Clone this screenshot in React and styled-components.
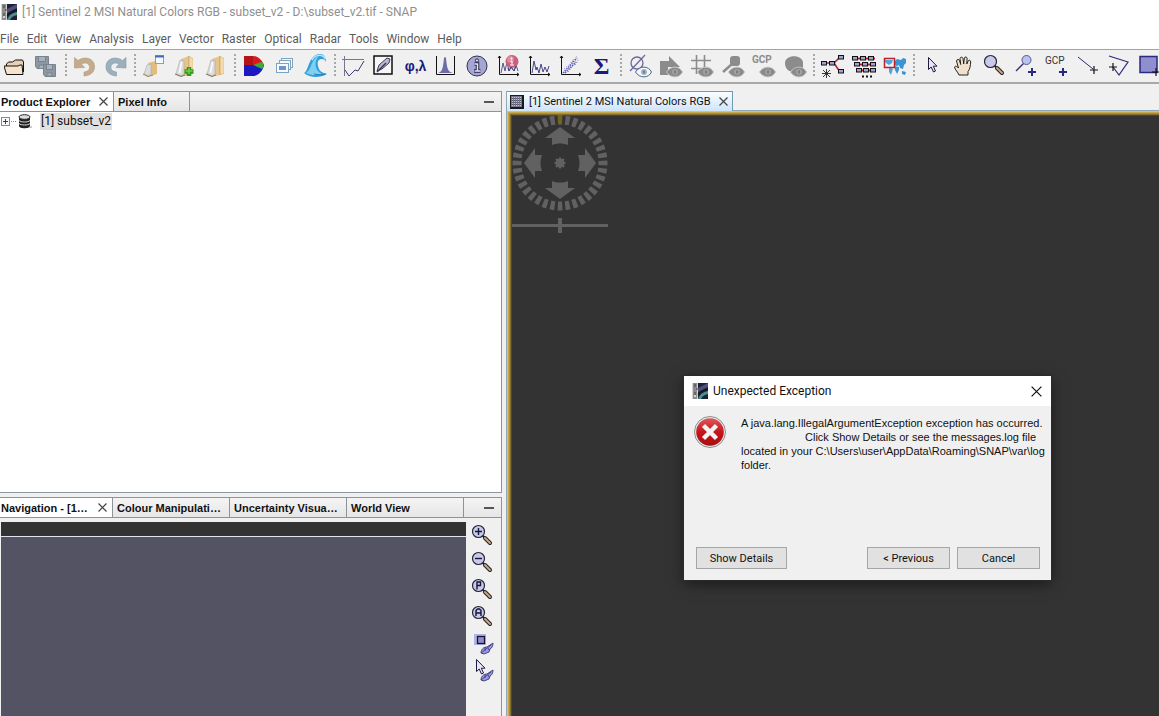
import React from 'react'
import styled, { createGlobalStyle } from 'styled-components'

const GlobalStyle = createGlobalStyle`
  * { box-sizing: border-box; }
  body { margin: 0; overflow: hidden; }
  button { font: inherit; color: inherit; background: none; border: 0; padding: 0; white-space: nowrap; }
  h1, h2, p { margin: 0; font: inherit; }
  svg { display: block; flex: none; }
`

const Window = styled.div`
  height: 100vh;
  display: flex;
  flex-direction: column;
  overflow: hidden;
  background: #f0f0f0;
  color: #111;
  font: 11px Roboto, sans-serif;
`

const TitleBar = styled.header`
  height: 24px;
  display: flex;
  align-items: center;
  gap: 5px;
  padding-left: 1px;
  background: #fff;
  color: #8f8f8f;
  font-size: 12px;
`

const MenuBar = styled.nav`
  height: 25px;
  display: flex;
  align-items: center;
  gap: 8px;
  padding-top: 4px;
  background: #fff;
  color: #5c5c5c;
  font-size: 12px;
`

const Toolbar = styled.div`
  height: 35px;
  display: flex;
  align-items: center;
  border-top: 1px solid #a3a3a3;
  border-bottom: 2px solid #a8a8a8;
  background: #f0f0f0;
`

const ToolButton = styled.button`
  flex: none;
  width: 31px;
  height: 27px;
  display: flex;
  align-items: center;
  justify-content: center;
`

const Separator = styled.span`
  flex: none;
  width: 7px;
  height: 24px;
  background: repeating-linear-gradient(#a8a8a8 0 2px, transparent 2px 4px) 3px 0 / 2px 100% no-repeat;
`

const Workspace = styled.main`
  flex: 1;
  min-height: 0;
  display: flex;
  gap: 4px;
  padding-top: 7px;
`

const Dock = styled.div`
  flex: 0 1 502px;
  min-width: 0;
  display: flex;
  flex-direction: column;
  gap: 4px;
`

const Panel = styled.section`
  flex: ${(p) => p.$grow} 1 0;
  min-height: 0;
  display: flex;
  flex-direction: column;
  border: solid #8d939d;
  border-width: 1px 1px ${(p) => (p.$open ? '0' : '1px')} 0;
`

const TabRow = styled.div`
  flex: none;
  height: 20px;
  display: flex;
  border-bottom: 1px solid #8d939d;
  background: linear-gradient(#f4f4f4, #e6e6e6);
`

const Tab = styled.button`
  width: ${(p) => p.$width}px;
  padding: 0 5px 0 ${(p) => (p.$first ? '1px' : '4px')};
  display: flex;
  align-items: center;
  justify-content: space-between;
  border-right: 1px solid #8d939d;
  background: ${(p) => (p.$active ? '#fff' : 'transparent')};
  font: bold 11px 'Liberation Sans', Arial, sans-serif;
`

const MinimizeButton = styled.button`
  width: 18px;
  margin-left: auto;
  display: flex;
  align-items: center;
`

const Tree = styled.div`
  flex: 1;
  background: #fff;
`

const TreeRow = styled.div`
  height: 19px;
  display: flex;
  align-items: center;
`

const TreeLabel = styled.span`
  height: 17px;
  margin-left: 8px;
  padding: 0 1px;
  line-height: 17px;
  font-size: 12px;
  background: #e0e0e0;
`

const NavigationBody = styled.div`
  flex: 1;
  min-height: 0;
  display: flex;
  padding: 4px 0 0 1px;
`

const Thumbnail = styled.div`
  flex: 1;
  display: flex;
  flex-direction: column;
  background: #333;
  padding-top: 14px;
`

const Viewport = styled.div`
  flex: 1;
  border-top: 1px solid #e4e4f0;
  background: #545363;
`

const ZoomTools = styled.div`
  width: 35px;
  display: flex;
  flex-direction: column;
  align-items: center;

  ${ToolButton} {
    padding-right: 2px;
  }
`

const Editor = styled.section`
  flex: 1;
  min-width: 0;
  display: flex;
  flex-direction: column;
  border-left: 1px solid #8fa9b8;
`

const EditorTabs = styled.div`
  flex: none;
  height: 20px;
  border-bottom: 1px solid #8fa9b8;
`

const EditorTab = styled.button`
  height: 20px;
  display: flex;
  align-items: center;
  gap: 5px;
  padding: 0 4px 0 3px;
  border: solid #6f9ab0;
  border-width: 1px 1px 0 0;
  background: linear-gradient(#fafdff, #cfe4fa);
`

const TabTitle = styled.span`
  margin-right: 3px;
`

const Canvas = styled.div`
  flex: 1;
  padding: 4px 5px;
  background: #333;
  box-shadow:
    inset 1px 1px 0 #dcc070,
    inset 2px 2px 0 #c9a64c,
    inset 3px 3px 0 #ac8d38,
    inset 4px 4px 0 #83702f,
    inset 5px 5px 0 #504726;
`

const Dialog = styled.div`
  position: absolute;
  left: 684px;
  top: 376px;
  width: 367px;
  height: 204px;
  display: flex;
  flex-direction: column;
  background: #f0f0f0;
  box-shadow: 0 0 0 1px #2b2b2b, 0 4px 14px rgba(0, 0, 0, 0.5);
`

const DialogTitle = styled.div`
  height: 30px;
  display: flex;
  align-items: center;
  gap: 5px;
  padding: 0 9px 0 8px;
  background: #fff;
  font-size: 12px;

  button {
    margin-left: auto;
  }
`

const DialogBody = styled.div`
  flex: 1;
  display: flex;
  align-items: flex-start;
  gap: 14px;
  padding: 10px;
`

const Message = styled.p`
  font-family: 'Liberation Sans', Arial, sans-serif;
  line-height: 14px;
  white-space: pre;
`

const IndentedLine = styled.span`
  padding-left: 64px;
`

const DialogActions = styled.div`
  display: flex;
  gap: 7px;
  padding: 0 11px 11px 12px;
`

const PushButton = styled.button`
  && {
    width: ${(p) => (p.$wide ? 91 : 83)}px;
    height: 22px;
    margin-right: ${(p) => (p.$wide ? 'auto' : '0')};
    border: 1px solid #a6a6a6;
    background: #e1e1e1;
  }
`

const Logo = () => (
  <svg width="16" height="16" viewBox="0 0 16 16">
    <rect width="16" height="16" fill="#1c2233" />
    <rect width="6" height="16" fill="#d4d4d4" />
    <path d="M1 1h4M1 3h4M3 1v3M1 5h4M1 7h4M5 5v2M1 9h4M1 11h4M3 9v3M1 13h1M4 13h1M1 15h4" stroke="#444" />
    <path d="M6 5 16 0v4L6 9z" fill="#4a4f7d" />
    <path d="M6 16C8 11 11 9 16 8v3c-4 1-5 2-7 5z" fill="#4d8f8f" />
    <path d="M6 12c3-4 6-5 10-6" stroke="#0b0d16" fill="none" />
  </svg>
)

const Cross = ({ size = 9, color = '#444' }) => (
  <svg width={size} height={size} viewBox="0 0 9 9">
    <path d="m.5.5 8 8m0-8-8 8" stroke={color} strokeWidth={size > 9 ? 1 : 1.2} />
  </svg>
)

const Eye = ({ color = '#c4c4c4', fill = '#8a8a8a', pupil = '#a2a2a2' }) => (
  <g>
    <path d="M7.500 18c4-6.500 13-6.500 16 0-3 6.500-12 6.500-16 0z" fill={fill} stroke={color} />
    <circle cx="16" cy="18" r="3" fill={pupil} />
    <path d="M16 16.500v3" stroke="#6f6f6f" strokeWidth="1.500" />
  </g>
)

const Axes = () => (
  <path d="M2.500 2v18.500H22M1 4l1.500-2L4 4m16 15 2 1.500-2 1.500" fill="none" stroke="#111" />
)

const Plus = ({ x, y, color = '#2a2a80', w = 2 }) => (
  <path d={`M${x - 4} ${y}h8M${x} ${y - 4}v8`} stroke={color} strokeWidth={w} />
)

const Folder = () => (
  <g>
    <path d="M8 5l8-3 4 2v16l-8 2-4-2z" fill="#e6c48a" />
    <path d="M16 2v19" stroke="#c79f5e" />
    <path d="M16.500 3l3 2v14l-3 1z" fill="#f2dcae" />
    <path d="M3 20l4-14 4 1v13l-3 2z" fill="#dcdcdc" stroke="#a9a9a9" strokeWidth=".6" />
    <path d="M8.500 8 6.500 19" stroke="#fbfbfb" strokeWidth="1.500" />
    <path d="M2 20l6 2.500 4-1.500" stroke="#7d6f58" fill="none" />
  </g>
)

const Loupe = ({ sign }) => (
  <g transform="translate(-1.500 -1.500)">
    <path d="m13 13 3 3" stroke="#222" strokeWidth="2" />
    <path d="m15.500 15.500 5 5" stroke="#222" strokeWidth="4" strokeLinecap="round" />
    <path d="m15.500 15.500 5 5" stroke="#c9a88a" strokeWidth="2" strokeLinecap="round" />
    <circle cx="9" cy="9" r="6" fill="#c9c9ea" stroke="#26263a" strokeWidth="1.200" />
    {sign && <path d={sign} fill="none" stroke="#14143a" strokeWidth="1.400" />}
  </g>
)

const Pointer = ({ x = 0, y = 0 }) => (
  <path
    transform={`translate(${x} ${y})`}
    d="M8.500 3.500v12l2.700-2.500 2.300 5 2-1-2.200-4.800h3.700z"
    fill="#e6e6f6"
    stroke="#1c1c40"
  />
)

const Node = ({ x, y }) => <rect x={x + 0.5} y={y + 0.5} width="5" height="3.500" fill="#a2a2d0" stroke="#111" />

const Sync = () => (
  <g>
    <path d="M10 21c0-3 2-6 6-6l6-4c0 3-1 5-3 6l-1 3-5 2z" fill="#9a9ad8" stroke="#44448c" />
    <path d="m10 21 10-8M14 15v4m3-3 1 2" stroke="#33337a" strokeWidth=".8" />
  </g>
)

const icons = {
  open: (
    <g stroke="#111">
      <path d="M2.500 19V10l2-2h4l3-2h7l1 2v10" fill="#e8d0b4" />
      <path d="M2.500 20.500 0 12h14l2-1h2l1 9.500z" fill="#f7e2cc" />
    </g>
  ),
  save: (
    <g stroke="#78838f">
      <path d="M.5 2.500h13v12H2l-1.500-2z" fill="#8c97a4" />
      <path d="M3.500 2.500h7v5h-7zM4 11h6v3.500H4z" fill="#a9b2bc" />
      <path d="M8.500 10.500h12v12H10l-1.500-2z" fill="#8c97a4" />
      <path d="M11.500 10.500h6v5h-6zM12 19h5v3h-5z" fill="#a9b2bc" />
    </g>
  ),
  undo: (
    <path d="M1.500 3.500 5 6.500c7-5 16-2 16.500 5.500.4 6-4 9.500-10.500 10v-4c4-.5 6-2.500 5.500-5.500-.6-3.500-4.500-4.500-8-2.500l3 3.500-10 .5z" fill="#c3ab8c" stroke="#ae977a" strokeWidth=".6" />
  ),
  redo: (
    <path d="M22 3.500 18.500 6.500c-7-5-16-2-16.500 5.500-.4 6 4 9.500 10.500 10v-4c-4-.5-6-2.500-5.500-5.500.6-3.500 4.500-4.500 8-2.500l-3 3.500 10 .5z" fill="#9bb0ba" stroke="#8499a5" strokeWidth=".6" />
  ),
  folderWindow: (
    <g>
      <path d="m6 9 7-2 2 1v12l-6 2z" fill="#e2bd7d" />
      <path d="m2 20 3-9 4-1v10l-3 2z" fill="#dcdcdc" stroke="#a9a9a9" strokeWidth=".6" />
      <path d="M1 20l5 2.500 5-1.500" stroke="#97815a" fill="none" />
      <rect x="13.500" y="1.500" width="8" height="8" fill="#f4f8ff" stroke="#7f9fd0" />
      <path d="M13 2.500h9" stroke="#3d6ec0" strokeWidth="2" />
    </g>
  ),
  folderAdd: (
    <g>
      <Folder />
      <path d="M11.500 17.500h9M16 13v9" stroke="#2f9a1c" strokeWidth="4.500" />
      <path d="M12.500 17h7M16 14v6" stroke="#6fd04a" strokeWidth="1.500" />
    </g>
  ),
  folder: <Folder />,
  rgb: (
    <g>
      <path d="M2 2h9c5 0 9 4 11 9H2z" fill="#d8191f" />
      <path d="M2 11h20c-1 6-6 11-11 11H2z" fill="#1a1ac0" />
      <path d="M11 11c4-1 7-3 9-3 2 3 2 5 0 7-3-1-6-3-9-4z" fill="#3faa35" />
      <path d="M2 2h9v9H2z" fill="#b3141a" />
    </g>
  ),
  layers: (
    <g fill="#f6fafc" stroke="#7fa3bd">
      <rect x="8.500" y="4.500" width="11" height="9" />
      <rect x="6.500" y="6.500" width="11" height="9" />
      <rect x="3.500" y="9.500" width="12" height="9" />
      <rect x="6" y="12" width="7" height="4" fill="#6a95cf" stroke="none" />
    </g>
  ),
  wave: (
    <g>
      <path d="M0 19C5 17 4 2 15 0c4-.5 7 2 7 8-1-2-2-3-4-3-4 0-5 3-4 7 1 5 4 7 9 8-7 4-17 4-23-1z" fill="#2f9fd8" />
      <path d="M2 19C8 15 7 4 15 2c-5 5-5 14 3 18-5 2-12 1-16-1z" fill="#7fd0f0" />
      <path d="M8 6C11 1 18-1 21.500 5" stroke="#bfe8f8" fill="none" strokeWidth="1.500" />
      <path d="M10 20c4 1 8 1 12 0" stroke="#1c7fc0" fill="none" />
    </g>
  ),
  chart: (
    <g fill="none" stroke="#77778c">
      <path d="M2.500 2v20M0 5.500h22" />
      <path d="m3 16 4 6 6-6 3 1 3-5 3-5" stroke="#3a3a72" />
    </g>
  ),
  pen: (
    <g>
      <rect x="1" y="2" width="18" height="18" fill="#f7f7fa" stroke="#111" strokeWidth="1.500" />
      <path d="m4 17 2-6 8-7 3 1-1 4-7 6z" fill="#b9b9cc" stroke="#3f3f62" />
      <path d="m4 18 9-9" stroke="#33334f" strokeWidth="1.500" />
    </g>
  ),
  histogram: (
    <g>
      <path d="M1.500 2v18.500h18V2" fill="none" stroke="#111" />
      <path d="M3 19c4-1 5-4 6-15 0-1 2-1 2 0 1 11 2 14 7 15z" fill="#6c6ca6" />
    </g>
  ),
  info: (
    <g transform="translate(-1 0)">
      <circle cx="12" cy="12" r="10" fill="#a6a6d4" stroke="#33334d" />
      <path d="M9.500 10h3v7m-3.500 0h6.500" fill="none" stroke="#26264d" strokeWidth="3.500" />
      <path d="M9.500 10h3v7m-3 0h6" fill="none" stroke="#e6e6f6" strokeWidth="1.500" />
      <circle cx="12" cy="6.500" r="1.600" fill="#e6e6f6" stroke="#26264d" />
    </g>
  ),
  infoChart: (
    <g>
      <Axes />
      <path d="M4 19 6 9l2 8 2-9 2 9 2-4 3 4 2-6 2 6" fill="none" stroke="#555590" />
      <circle cx="15" cy="7.500" r="6.500" fill="#c8607f" />
      <circle cx="13.500" cy="5.500" r="3.500" fill="#e08aa0" />
      <path d="M13.500 7h1.500v4m-2 0h4" stroke="#fff" fill="none" />
      <circle cx="14.500" cy="4.500" r="1" fill="#fff" />
      <path d="m11 14 1 3 2-4 3 4 2-5" fill="none" stroke="#444480" />
    </g>
  ),
  profile: (
    <g>
      <Axes />
      <path d="M4 19 6 7l2 9 1-3 2 6 2-9 2 8 2-5 2 5 2-6" fill="none" stroke="#44448c" />
    </g>
  ),
  scatter: (
    <g>
      <Axes />
      <path d="m4 19 14-15M6 19 17 8" stroke="#5c5cb8" strokeWidth="1.500" strokeDasharray="1.500 1" />
      <path d="m5 15 6-5 4-6M9 18l5-6 6-7M13 8l5-6M16 11l3-4" stroke="#7a7ac8" strokeDasharray="1 2" fill="none" />
    </g>
  ),
  noOverlay: (
    <g>
      <circle cx="9" cy="9" r="6" fill="none" stroke="#6a6a9c" strokeWidth="1.300" />
      <path d="M2 17 17 1" stroke="#6a6a9c" strokeWidth="1.300" />
      <Eye color="#4b6484" fill="#f4f7fa" pupil="#9db4c8" />
    </g>
  ),
  shapes: (
    <g>
      <path d="M1 7h9V2l11 11H9v8H1z" fill="#8c8c8c" />
      <Eye />
    </g>
  ),
  grid: (
    <g>
      <path d="M6.500 1v19M14.500 1v14M1 6.500h20M1 14.500h10" stroke="#8c8c8c" strokeWidth="1.600" />
      <Eye />
    </g>
  ),
  pin: (
    <g>
      <rect x="9" y="2" width="10" height="10" rx="3" fill="#8c8c8c" />
      <path d="m2 18 9-8" stroke="#8c8c8c" strokeWidth="2.500" />
      <Eye />
    </g>
  ),
  gcp: (
    <g>
      <text x="0" y="9" fontSize="10" fontWeight="bold" fill="#8c8c8c">GCP</text>
      <Eye />
    </g>
  ),
  mask: (
    <g>
      <path d="M2 9c0-9 18-9 18 0v8H6c-3-2-4-5-4-8z" fill="#8c8c8c" />
      <Eye />
    </g>
  ),
  graph: (
    <g>
      <path d="M3 9h10l6-6M13 9l6 9" stroke="#c0182c" strokeWidth="1.500" fill="none" />
      <Node x={0} y={7} />
      <Node x={8} y={7} />
      <Node x={17} y={1} />
      <Node x={17} y={15} />
      <path d="M5.500 15v9M1 19.500h9m-8-3.500 7 7m0-7-7 7" stroke="#222" strokeWidth=".9" />
    </g>
  ),
  batch: (
    <g>
      <path d="M2 4.500h21M3 10.500h20M4 16.500h18" stroke="#c0182c" strokeWidth="2" />
      {[0, 8, 16].map((x) => <Node key={x} x={x} y={2} />)}
      {[2, 10, 18].map((x) => <Node key={x} x={x} y={8} />)}
      {[4, 11, 18].map((x) => <Node key={x} x={x} y={14} />)}
      <path d="M10 22.500h2m2 0h2m2 0h2" stroke="#111" strokeWidth="2" />
    </g>
  ),
  world: (
    <g>
      <path d="M1 6h9l-1 3-3 2-3-2zM6 13l4 2-2 6-2-3z" fill="#4fa6dc" />
      <path d="m11 8 3-3 4 1 2-2 3 1v4l-2 2-1 4-3-1-1-3-2 1-3-1zM11 12l5 1v3l-2 4-2-4zM19 17l4 1-1 3-3-1z" fill="#3c94d2" />
      <rect x="1.500" y="4.500" width="10" height="9" fill="none" stroke="#b8202c" strokeWidth="1.500" />
    </g>
  ),
  select: <Pointer x={-1} />,
  pan: (
    <path
      d="M7 21c-1-3-4-5-4.500-8 1-1.500 2.500-.8 4 1L4.500 7C5 5 7 5 7.500 6.500l1.200 4L8 4.500c.4-1.800 2.600-1.800 3 0l.7 5.500.6-6c.6-1.500 2.600-1.300 2.800.3L14.800 10l1.300-3c.9-1.500 2.700-.7 2.600.9-.2 3.600-.8 7.600-2.700 9.600V21z"
      fill="#f1e0cc"
      stroke="#222"
    />
  ),
  zoom: <Loupe />,
  pinAdd: (
    <g>
      <path d="m2 17 8-8" stroke="#333370" strokeWidth="1.500" />
      <circle cx="12.500" cy="6" r="4.500" fill="#b9c4ec" stroke="#55559a" />
      <Plus x={18} y={18} />
    </g>
  ),
  gcpAdd: (
    <g>
      <text x="0" y="10" fontSize="10" fill="#333">GCP</text>
      <Plus x={18} y={18} />
    </g>
  ),
  line: (
    <g>
      <path d="M2 3 17 15" stroke="#2a2a80" />
      <Plus x={18} y={16} color="#111" w={1.2} />
    </g>
  ),
  polygon: (
    <g>
      <path d="m2 2 19 6-9 13-6-8" fill="none" stroke="#2a2a80" strokeWidth="1.200" />
      <Plus x={6} y={13} color="#111" w={1.2} />
    </g>
  ),
  rectangle: (
    <g>
      <rect x="2" y="2.500" width="17" height="16" fill="#8f8fd0" stroke="#2a2a80" strokeWidth="1.500" />
      <Plus x={18} y={18} color="#111" w={1.2} />
    </g>
  ),
  zoomIn: <Loupe sign="M9 5.500v7M5.500 9h7" />,
  zoomOut: <Loupe sign="M5.500 9h7" />,
  zoomPixel: <Loupe sign="M7.500 13V5.500h3.500v3.500H7.500" />,
  zoomAll: <Loupe sign="M6.500 12.500V7l1.500-1.500h2L11.500 7v5.500M6.500 9.500h5" />,
  syncViews: (
    <g>
      <rect x="3" y="2" width="12" height="11" fill="#b4b4e4" />
      <rect x="6.500" y="4.500" width="7" height="7" fill="#8f8fc8" stroke="#14143a" strokeWidth="1.300" />
      <Sync />
    </g>
  ),
  syncCursor: (
    <g>
      <Sync />
      <Pointer x={-3} y={-3} />
    </g>
  ),
}

const Icon = ({ name }) => (
  <svg width="24" height="24" viewBox="0 0 24 24">{icons[name]}</svg>
)

const Symbol = styled.span`
  color: #1a1a7a;
  font: bold ${(p) => p.$size}px 'Liberation Sans', sans-serif;
`

const SumSymbol = styled(Symbol)`
  font-family: 'Liberation Serif', serif;
`

const menus = ['File', 'Edit', 'View', 'Analysis', 'Layer', 'Vector', 'Raster', 'Optical', 'Radar', 'Tools', 'Window', 'Help']

const toolGroups = [
  ['open', 'save'],
  ['undo', 'redo'],
  ['folderWindow', 'folderAdd', 'folder'],
  ['rgb', 'layers', 'wave'],
  ['chart', 'pen', 'geo', 'histogram', 'info', 'infoChart', 'profile', 'scatter', 'sum'],
  ['noOverlay', 'shapes', 'grid', 'pin', 'gcp', 'mask'],
  ['graph', 'batch', 'world'],
  ['select', 'pan', 'zoom', 'pinAdd', 'gcpAdd', 'line', 'polygon', 'rectangle'],
]

const zoomTools = ['zoomIn', 'zoomOut', 'zoomPixel', 'zoomAll', 'syncViews', 'syncCursor']

const Tool = ({ name }) => (
  <ToolButton type="button" aria-label={name}>
    {name === 'geo' && <Symbol $size={14}>φ,λ</Symbol>}
    {name === 'sum' && <SumSymbol $size={24}>Σ</SumSymbol>}
    {icons[name] && <Icon name={name} />}
  </ToolButton>
)

const Minimize = () => (
  <MinimizeButton type="button" aria-label="Minimize">
    <svg width="12" height="4"><path d="M1 2h10" stroke="#555" strokeWidth="2" /></svg>
  </MinimizeButton>
)

const ARROW = 'M48 12 63 23h-7v7c-5-2-11-2-16 0v-7h-7z'

const Compass = () => (
  <svg width="96" height="120" viewBox="0 0 96 120">
    <g fill="#616161">
      <circle cx="48" cy="48" r="43" fill="none" stroke="#616161" strokeWidth="9" pathLength="360" strokeDasharray="6 4" transform="rotate(-93 48 48)" />
      <path d="M46 0h4v9h-4z" fill="#75631c" />
      {[0, 90, 180, 270].map((angle) => (
        <path key={angle} d={ARROW} transform={`rotate(${angle} 48 48)`} />
      ))}
      <circle cx="48" cy="48" r="4.500" />
      <path d="M48 42.500v11M42.500 48h11m-9.500-4 8 8m0-8-8 8" stroke="#616161" strokeWidth="2" />
      <path d="M0 109h96v3H0z" />
      <path d="M46 103h4v15h-4z" />
    </g>
  </svg>
)

const ErrorIcon = () => (
  <svg width="33" height="33" viewBox="0 0 33 33">
    <defs>
      <linearGradient id="red" x2="0" y2="1">
        <stop offset="0" stopColor="#e0585c" />
        <stop offset=".5" stopColor="#c4161c" />
        <stop offset="1" stopColor="#a80d12" />
      </linearGradient>
    </defs>
    <circle cx="16" cy="16" r="15.500" fill="#e8e8e8" stroke="#8f8f8f" />
    <circle cx="16" cy="16" r="13.800" fill="url(#red)" />
    <path d="m9.500 9.500 13 13m0-13-13 13" stroke="#f3f3f3" strokeWidth="4.500" />
  </svg>
)

const TreeIcons = () => (
  <svg width="32" height="17" viewBox="0 0 32 17">
    <rect x="1.500" y="4.500" width="8" height="8" fill="#f8f8fc" stroke="#7d8aa5" />
    <path d="M3 8.500h5M5.500 6v5" stroke="#2a3f7a" />
    <path d="M11 8.500h6" stroke="#888" strokeDasharray="1 1" />
    <path d="M19 4v9c0 3 11 3 11 0V4z" fill="#222" />
    <ellipse cx="24.500" cy="4" rx="5.500" ry="2.300" fill="#ddd" stroke="#222" />
    <path d="M19 7.500c2 2 9 2 11 0M19 10.500c2 2 9 2 11 0" stroke="#ddd" fill="none" />
    <path d="M29 14h3" stroke="#999" />
  </svg>
)

const BandIcon = () => (
  <svg width="14" height="14" viewBox="0 0 14 14" shapeRendering="crispEdges">
    <rect width="14" height="14" fill="#1a1a1a" />
    <rect x="1" y="1" width="11" height="11" fill="#77778c" />
    <path d="M2 2.500h9M2 4.500h9M2 6.500h9M2 8.500h9M2 10.500h9" stroke="#d9d25c" strokeDasharray="1 1" />
    <path d="M2 3.500h9M2 5.500h9M2 7.500h9M2 9.500h9" stroke="#55556c" strokeDasharray="1 1" />
  </svg>
)

export default function App() {
  return (
    <Window>
      <GlobalStyle />
      <TitleBar>
        <Logo />
        <h1>[1] Sentinel 2 MSI Natural Colors RGB - subset_v2 - D:\subset_v2.tif - SNAP</h1>
      </TitleBar>
      <MenuBar>
        {menus.map((menu) => <button type="button" key={menu}>{menu}</button>)}
      </MenuBar>
      <Toolbar>
        {toolGroups.map((group, i) => (
          <React.Fragment key={i}>
            {i > 0 && <Separator />}
            {group.map((name) => <Tool key={name} name={name} />)}
          </React.Fragment>
        ))}
      </Toolbar>

      <Workspace>
        <Dock>
          <Panel $grow={402}>
            <TabRow>
              <Tab type="button" $width={114} $active $first>Product Explorer <Cross /></Tab>
              <Tab type="button" $width={76}>Pixel Info</Tab>
              <Minimize />
            </TabRow>
            <Tree>
              <TreeRow>
                <TreeIcons />
                <TreeLabel>[1] subset_v2</TreeLabel>
              </TreeRow>
            </Tree>
          </Panel>
          <Panel $grow={219} $open>
            <TabRow>
              <Tab type="button" $width={113} $active $first>Navigation - [1… <Cross /></Tab>
              <Tab type="button" $width={117}>Colour Manipulati…</Tab>
              <Tab type="button" $width={117}>Uncertainty Visua…</Tab>
              <Tab type="button" $width={117}>World View</Tab>
              <Minimize />
            </TabRow>
            <NavigationBody>
              <Thumbnail><Viewport /></Thumbnail>
              <ZoomTools>
                {zoomTools.map((name) => <Tool key={name} name={name} />)}
              </ZoomTools>
            </NavigationBody>
          </Panel>
        </Dock>

        <Editor>
          <EditorTabs>
            <EditorTab type="button">
              <BandIcon />
              <TabTitle>[1] Sentinel 2 MSI Natural Colors RGB</TabTitle>
              <Cross />
            </EditorTab>
          </EditorTabs>
          <Canvas><Compass /></Canvas>
        </Editor>
      </Workspace>

      <Dialog role="dialog" aria-labelledby="dialog-title">
        <DialogTitle>
          <Logo />
          <h2 id="dialog-title">Unexpected Exception</h2>
          <button type="button" aria-label="Close"><Cross size={11} color="#111" /></button>
        </DialogTitle>
        <DialogBody>
          <ErrorIcon />
          <Message>
            A java.lang.IllegalArgumentException exception has occurred.<br />
            <IndentedLine>Click Show Details or see the messages.log file</IndentedLine><br />
            located in your C:\Users\user\AppData\Roaming\SNAP\var\log<br />
            folder.
          </Message>
        </DialogBody>
        <DialogActions>
          <PushButton type="button" $wide>Show Details</PushButton>
          <PushButton type="button">&lt; Previous</PushButton>
          <PushButton type="button">Cancel</PushButton>
        </DialogActions>
      </Dialog>
    </Window>
  )
}
